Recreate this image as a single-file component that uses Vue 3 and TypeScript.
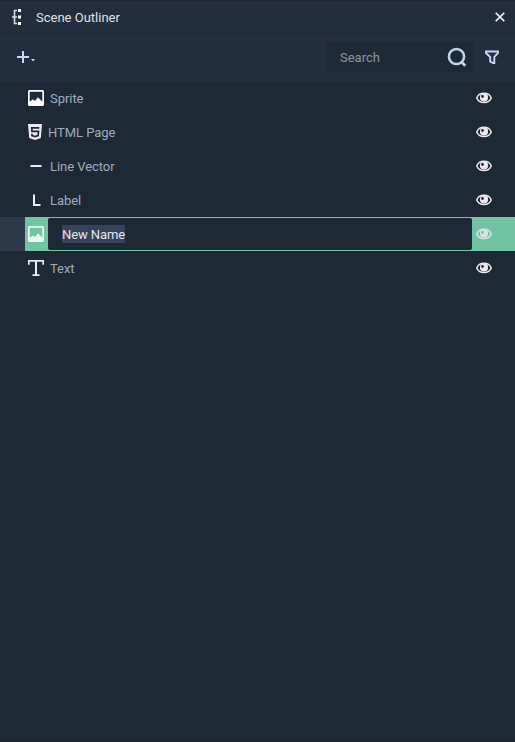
<script setup lang="ts">
import { ref } from 'vue'

type Kind = 'image' | 'html' | 'line' | 'label' | 'text'
interface SceneNode {
  name: string
  kind: Kind
  editing?: boolean
}

const nodes = ref<SceneNode[]>([
  { name: 'Sprite', kind: 'image' },
  { name: 'HTML Page', kind: 'html' },
  { name: 'Line Vector', kind: 'line' },
  { name: 'Label', kind: 'label' },
  { name: 'New Name', kind: 'image', editing: true },
  { name: 'Text', kind: 'text' },
])
</script>

<template>
  <section class="panel">
    <header class="titlebar">
      <svg class="tree-icon" width="10" height="16" viewBox="0 0 10 16">
        <path d="M5 1.500H2.500V14.500H5M0 8H5" fill="none" stroke="#d9dce3" stroke-width="1.600" />
        <path d="M6 0h3v3H6zM6 6.500h3v3H6zM6 13h3v3H6z" fill="#fff" />
      </svg>
      <h1 class="title">Scene Outliner</h1>
      <svg class="close" width="10" height="10" viewBox="0 0 10 10">
        <path d="M.7.7 9.300 9.300M9.300.7.7 9.300" stroke="#fff" stroke-width="1.600" />
      </svg>
    </header>

    <div class="toolbar">
      <svg class="add" width="19" height="12" viewBox="0 0 19 12">
        <path d="M6 0v12M0 6h12" stroke="#c5daf2" stroke-width="2" />
        <path d="M14 8h4l-2 2.500z" fill="#c5daf2" />
      </svg>
      <div class="search">
        <span class="placeholder">Search</span>
        <svg width="20" height="20" viewBox="0 0 20 20" fill="none" stroke="#c0d6ef">
          <circle cx="9.500" cy="9.500" r="7.600" stroke-width="2.500" />
          <path d="m14.500 15 3.800 3.700" stroke-width="2.800" />
        </svg>
      </div>
      <svg class="filter" width="14" height="14" viewBox="0 0 14 14">
        <path d="M1 1.500h12V3L9.300 7v6.700L5.200 11.500V7L1 3z" fill="none" stroke="#c5daf2" stroke-width="1.900" />
      </svg>
    </div>

    <ul class="tree">
      <li v-for="(node, i) in nodes" :key="i" class="row" :class="{ selected: node.editing }">
        <div class="gutter"></div>
        <div class="content">
          <svg v-if="node.kind === 'image'" class="icon" width="16" height="16" viewBox="0 0 16 16">
            <path fill="#fff" fill-rule="evenodd" d="M1.500 0h13A1.500 1.500 0 0 1 16 1.500v13a1.500 1.500 0 0 1-1.500 1.500h-13A1.500 1.500 0 0 1 0 14.500v-13A1.500 1.500 0 0 1 1.500 0zM1.700 1.700v10l3.100-2.400 2 1.600 3.200-3.700 4.300 4.500v-10z" />
          </svg>
          <svg v-else-if="node.kind === 'html'" class="icon html" width="14" height="16" viewBox="0 0 14 16">
            <path fill="#ece9f1" d="M0 0h14l-1.200 14L7 16l-5.800-2z" />
            <path fill="none" stroke="#1e2936" stroke-width="1.700" d="M11.300 3.900H3.700l.3 3.500h6.500l-.4 4.200L7 12.600l-3-1-.1-1.800" />
          </svg>
          <svg v-else-if="node.kind === 'line'" class="icon" width="16" height="16" viewBox="0 0 16 16">
            <path fill="#ece9f1" d="M2.500 7h11v2h-11z" />
          </svg>
          <svg v-else-if="node.kind === 'label'" class="icon" width="16" height="16" viewBox="0 0 16 16">
            <path fill="none" stroke="#f1eef5" stroke-width="2" d="M6 2.500V13h6.500" />
          </svg>
          <svg v-else class="icon" width="16" height="16" viewBox="0 0 16 16">
            <path fill="none" stroke="#ece9f1" stroke-width="1.700" d="M.85 4.800V.85h14.300v3.950M4.500 15.150h7" />
            <path fill="none" stroke="#ece9f1" stroke-width="2" d="M8 1v14" />
          </svg>

          <div v-if="node.editing" class="editor"><span class="selection">{{ node.name }}</span></div>
          <span v-else class="name">{{ node.name }}</span>

          <svg class="eye" width="16" height="12" viewBox="0 0 16 12">
            <path d="M.8 6C3-.2 13-.2 15.200 6 13 12 3 12 .8 6z" fill="none" stroke="#ece9f1" stroke-width="1.500" />
            <path fill="#ece9f1" fill-rule="evenodd" d="M8 1.300a4.100 4.100 0 1 1 0 8.200 4.100 4.100 0 0 1 0-8.200zM6.500 3.100a1.400 1.400 0 1 0 0 2.800 1.400 1.400 0 0 0 0-2.800z" />
          </svg>
        </div>
      </li>
    </ul>
  </section>
</template>

<style>
body {
  margin: 0;
  background: #1e2936;
}
</style>

<style scoped>
.panel {
  box-sizing: border-box;
  height: 742px;
  background: #1e2936;
  border-bottom: 1px solid #1f2430;
  font: 13px/16px Roboto, "Liberation Sans", sans-serif;
  color: #a0acbd;
}
svg {
  display: block;
  flex: none;
}
.titlebar {
  box-sizing: border-box;
  display: flex;
  align-items: center;
  height: 34px;
  padding: 0 10px 0 12px;
  background: #222d3d;
  border-top: 1px solid #1e2632;
  border-bottom: 1px solid #1e2835;
}
.title {
  flex: 1;
  margin: 0 0 0 14px;
  padding-top: 2px;
  font: inherit;
  color: #dfe3e9;
}
.toolbar {
  box-sizing: border-box;
  display: flex;
  align-items: center;
  height: 47px;
  padding: 0 16px 1px 17px;
  background: #222d3d;
}
.search {
  box-sizing: border-box;
  display: flex;
  align-items: center;
  justify-content: space-between;
  width: 148px;
  height: 30px;
  margin-left: auto;
  padding: 0 7px 0 14px;
  border-radius: 2px;
  background: #1e2936;
  color: #8d96a2;
}
.placeholder {
  padding-top: 1px;
}
.filter {
  margin-left: 11px;
}
.tree {
  margin: 0;
  padding: 0;
  list-style: none;
}
.row {
  display: flex;
  height: 34px;
}
.gutter {
  width: 25px;
}
.content {
  display: flex;
  flex: 1;
  align-items: center;
  padding: 0 23px 0 3px;
}
.name {
  flex: 1;
  margin-left: 6px;
  padding-top: 2px;
  letter-spacing: -0.05px;
}
.selected .gutter {
  background: #2d3848;
}
.selected .content {
  background: #73c4a4;
}
.selected .icon,
.selected .eye {
  opacity: 0.85;
}
.editor {
  box-sizing: border-box;
  display: flex;
  flex: 1;
  align-items: center;
  height: 32px;
  margin: 0 4px;
  padding-left: 14px;
  border-radius: 2px;
  background: #1e2936;
  color: #e2e6ec;
  letter-spacing: -0.1px;
}
.selection {
  padding: 2px 0 0;
  background: #35425a;
}
</style>
